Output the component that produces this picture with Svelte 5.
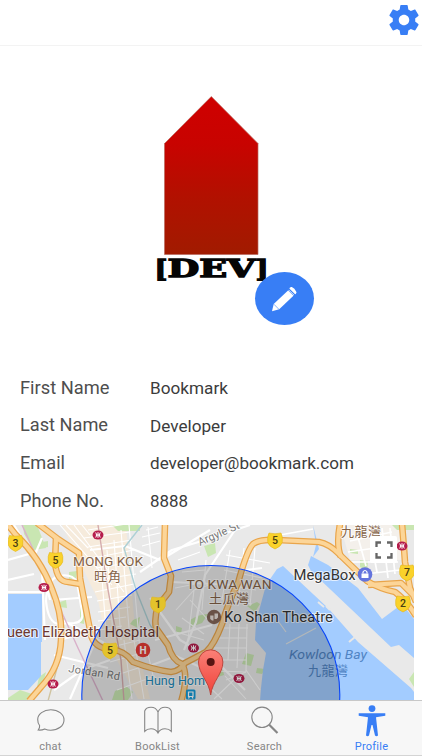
<script>
  const fields = [
    { label: 'First Name', value: 'Bookmark', lw: 89.5, vw: 78 },
    { label: 'Last Name', value: 'Developer', lw: 88, vw: 76 },
    { label: 'Email', value: 'developer@bookmark.com', lw: 45, vw: 204 },
    { label: 'Phone No.', value: '8888', lw: 84, vw: 38 }
  ];

  const tabs = [
    { id: 'chat', label: 'chat' },
    { id: 'books', label: 'BookList' },
    { id: 'search', label: 'Search' },
    { id: 'profile', label: 'Profile', active: true }
  ];

  // Minor streets of the map
  const streets = [
    'M60 525L112 585M66 525L88 548M74 525L124 592M82 525L90 535M88 530L126 524M84 538L130 532M88 547L132 540M93 558L134 550M96 568L134 562',
    'M96 580L136 574M95 592L134 584M97 601L132 595M98 612L130 607M98 621L126 617M99 630L122 626',
    'M101 565L106 630M107 550L113 635M114 540L121 640M121 530L130 640M129 525L140 650',
    'M108 648L140 640M110 662L145 652M114 676L150 664M117 690L155 676M124 640L132 699M134 640L144 699M146 645L154 680',
    'M146 530L158 527M142 537L160 533M142 546L160 541M148 527L152 568M178 560L200 552M182 572L205 570M175 588L206 582',
    'M176 610L194 590L212 584M190 600L210 622M182 618L204 634M194 590L188 640M176 632L204 640M206 560L202 610',
    'M226 555L270 563M224 570L262 578M218 583L256 590M224 600L252 604M230 550L222 600M244 548L238 606M255 548L250 606',
    'M222 628L248 628M218 638L247 638M214 648L246 648M230 624L228 660M239 624L237 668M247 624L246 672L226 680',
    'M222 660L246 660M218 671L246 672M205 683L222 699M225 676L246 699M246 670L260 690M214 699L238 676'
  ];

  const mainStreets = [
    'M8 560L36 552L42 538M8 580L34 574M8 592L42 592M14 525L44 575L50 600M42 570L45 640',
    'M46 601Q47 580 58 576Q72 573 77 582L82 612Q84 622 74 623L58 624Q48 622 46 601Z',
    'M52 600L92 597M60 640L100 628M54 655L108 668M62 620L108 645M54 690L82 670L110 660M70 699L96 640',
    'M90 550L125 546L160 560M140 572L172 550L205 540L250 525M164 558L210 530M235 530L205 575L196 622L184 650',
    'M172 582L232 585L246 570L262 568M150 598L180 640L215 660L245 690M155 640L212 625M144 668L176 656L200 667'
  ];

  const highways = [
    'M8 525L16 535Q40 558 52 589Q63 616 61 640Q60 667 41 687L29 701',
    'M37 523L58 539L79 553L80 578L83 594L91 635Q94 648 112 650Q124 650 133 662Q154 670 171 672Q180 671 185 663L206 652Q214 645 222 624Q228 603 238 583Q247 550 253 544Q259 539 277 540L319 542Q329 544 338 553L367 581Q380 589 395 592Q407 601 416 616',
    'M56 538L55 563Q57 582 68 582L80 584M165 524L164 558L171 576L169 592L158 606Q154 618 156 628L168 645Q172 660 182 664Q189 675 181 702',
    'M340 524Q336 545 341 557M402 524L404 548L405 562L410 588L416 602M368 585L401 583L415 597'
  ];

  const shields = [
    [15.5, 543, '3'], [55.5, 560, '5'], [158, 604.5, '1'], [110, 650.5, '5'],
    [275, 540.5, '5'], [407, 572.5, '7'], [403, 603.5, '2']
  ];
  const stations = [[98, 535], [44, 587.5], [53, 684], [193.5, 648], [239, 678.5], [402, 546]];
  const parks = [
    'M23 525H37L46 548L34 550L24 534Z', 'M69 572L77 571L76 578L69 579Z', 'M60 602L66 600L67 608L60 607Z',
    'M80 600L86 605L84 624L80 623Z', 'M204 546L215 543L216 553L208 557Z', 'M190 620Q199 614 208 614L202 623L191 627Z',
    'M176 626L182 628L181 634L176 632Z', 'M246 653L254 655L251 666L242 664Z', 'M257 668L265 669L262 674L256 673Z',
    'M350 549L358 550V554L350 553Z', 'M360 560L368 561L367 571L360 567Z', 'M8 698L20 690L32 694L26 701H8Z',
    'M112 525H140V531H118Z', 'M42 542L48 541L48 547L42 548Z', 'M115 691L126 686L133 692L128 700H112Z',
    'M409 679L414 672V687Z', 'M217 672L223 670L224 675L218 677Z', 'M392 525H414V530H397Z', 'M133 620L140 617L138 628L130 624Z',
    'M247 606L257 602L260 604L255 612Z', 'M39 677L46 672L44 680L37 687Z'
  ];
</script>

<div class="page">
  <header>
    <svg class="gear" viewBox="2 2 20 20"><path d="M19.43 12.98c.04-.32.07-.64.07-.98s-.03-.66-.07-.98l2.11-1.65c.19-.15.24-.42.12-.64l-2-3.46c-.12-.22-.39-.3-.61-.22l-2.49 1c-.52-.4-1.08-.73-1.69-.98l-.38-2.65C14.46 2.18 14.25 2 14 2h-4c-.25 0-.46.18-.49.42l-.38 2.65c-.61.25-1.17.59-1.69.98l-2.49-1c-.23-.09-.49 0-.61.22l-2 3.46c-.13.22-.07.49.12.64l2.11 1.65c-.04.32-.07.65-.07.98s.03.66.07.98l-2.11 1.65c-.19.15-.24.42-.12.64l2 3.46c.12.22.39.3.61.22l2.49-1c.52.4 1.08.73 1.69.98l.38 2.65c.03.24.24.42.49.42h4c.25 0 .46-.18.49-.42l.38-2.65c.61-.25 1.17-.59 1.69-.98l2.49 1c.23.09.49 0 .61-.22l2-3.46c.12-.22.07-.49-.12-.64l-2.11-1.65zM12 15.5c-1.93 0-3.5-1.57-3.5-3.5s1.57-3.5 3.5-3.5 3.5 1.57 3.5 3.5-1.57 3.5-3.5 3.5z" /></svg>
  </header>

  <main>
    <section class="hero">
      <div class="avatar">
        <svg viewBox="151 90 120 200" width="120" height="200">
          <defs>
            <linearGradient id="red" x1="0" y1="0" x2="0" y2="1">
              <stop offset="0" stop-color="#cf0000" /><stop offset=".3" stop-color="#c80300" />
              <stop offset=".65" stop-color="#b11100" /><stop offset="1" stop-color="#a11b00" />
            </linearGradient>
          </defs>
          <path d="M211.3 96.5L258 143.5V254.5H164.5V143.5Z" fill="url(#red)" stroke="#b96a60" stroke-width=".7" />
          <g class="dev">
            <text class="bracket" x="154.5" y="278" textLength="13" lengthAdjust="spacingAndGlyphs">[</text>
            <text x="167.5" y="277" textLength="88" lengthAdjust="spacingAndGlyphs">DEV</text>
            <text class="bracket" x="255.5" y="278" textLength="13" lengthAdjust="spacingAndGlyphs">]</text>
          </g>
        </svg>
        <button class="edit" aria-label="Edit">
          <svg viewBox="255 272 59 53" width="59" height="53">
            <path d="M272 311.3L273.7 304L288.8 289.8L294.2 295L279.2 309.3Z" fill="#fff" />
            <path d="M290.4 288.4L291.5 287.9Q294 289 295.6 292.4L295.2 293.2Z" fill="#fff" stroke="#fff" stroke-width="1.8" stroke-linejoin="round" />
            <path d="M288 290.1L294 296M273.9 304.2L278.9 309.3" stroke="#387ef5" stroke-width=".6" />
          </svg>
        </button>
      </div>
    </section>

    <dl>
      {#each fields as f}
        <div class="field">
          <dt><svg width="130" height="24"><text x="0" y="18" textLength={f.lw} lengthAdjust="spacingAndGlyphs">{f.label}</text></svg></dt>
          <dd><svg width="230" height="24"><text x="0" y="18" textLength={f.vw} lengthAdjust="spacingAndGlyphs">{f.value}</text></svg></dd>
        </div>
      {/each}
    </dl>

    <svg class="map" viewBox="8 525 406 175" width="406" height="175">
      <rect x="8" y="525" width="406" height="176" fill="#e9e9e9" />
      <path d="M62 525H126L136 640L150 699H138L106 640L98 600Z" fill="#f6ebdc" />
      <path d="M340 525H402V560H350Z" fill="#f4f0eb" />
      {#each parks as d}<path {d} fill="#c9e6b2" />{/each}
      <g fill="#a3ccff">
        <path d="M10 594H42V642H41V676L28 690H8V594Z" />
        <path d="M283 566L328 608L358 642L411 688L414 692V701H260L261 688L263 670L266 653L255 640L256 622L266 585L277 569Z" />
        <path d="M311 556L328 565L358 588L382 619L402 604L414 619V658L399 645L391 647L311 571L308 565Z" />
        <path d="M313 525L319 549L313 557L316 545Z" />
      </g>
      <path d="M318 602L324 607M326 606L330 610M349 642L355 637" stroke="#e8e8e8" stroke-width="2" />
      <path d="M286 644L316 628M278 621L286 632" stroke="#dfe5e8" stroke-width="1.2" />
      <g fill="none" stroke="#fff" stroke-linejoin="round">
        {#each streets as d}<path {d} stroke-width="1.1" />{/each}
        {#each mainStreets as d}<path {d} stroke-width="2.2" />{/each}
        <path d="M280 535L313 529M350 541L392 532M348 552L396 545M356 530L366 566M369 530L377 572M382 528L388 578M350 562L398 562M365 574L400 570M390 528L395 574" stroke-width="1.7" />
      </g>
      <g fill="none" stroke-width="1.4">
        <path d="M22 525L38 560L78 648L103 701" stroke="#d9b1ca" />
        <path d="M98 525L108 590L121 660L124 701" stroke="#d5acad" />
        <path d="M63 618L62 650L48 701" stroke="#cfc3a0" />
        <path d="M142 525L124 548L136 590L150 625L188 675" stroke="#add0d5" />
      </g>
      <g fill="none" stroke-linejoin="round">
        {#each highways as d}<path {d} stroke="#e9a54b" stroke-width="6.6" />{/each}
        {#each highways as d}<path {d} stroke="#fcd598" stroke-width="4.2" />{/each}
      </g>

      <g class="place">
        <text x="73" y="566" textLength="70" lengthAdjust="spacingAndGlyphs">MONG KOK</text>
        <text x="94" y="580.5" textLength="27">旺角</text>
        <text x="186.5" y="588.5" textLength="85" lengthAdjust="spacingAndGlyphs">TO KWA WAN</text>
        <text x="209" y="602.5" textLength="40">土瓜灣</text>
        <text x="341" y="536" textLength="40">九龍灣</text>
      </g>
      <g class="road">
        <text x="200" y="546" textLength="44" transform="rotate(-24 200 546)">Argyle St</text>
        <text x="68" y="672" textLength="52" transform="rotate(9 68 672)">Jordan Rd</text>
      </g>
      <text class="poi hospital" x="7" y="637" textLength="152" lengthAdjust="spacingAndGlyphs">ueen Elizabeth Hospital</text>
      <text class="poi" x="224" y="622" textLength="109" lengthAdjust="spacingAndGlyphs">Ko Shan Theatre</text>
      <text class="poi" x="293.5" y="579.5" textLength="62" lengthAdjust="spacingAndGlyphs">MegaBox</text>
      <text class="bay" x="289" y="659" textLength="78" lengthAdjust="spacingAndGlyphs">Kowloon Bay</text>
      <text class="bay cjk" x="308" y="675" textLength="40">九龍灣</text>
      <text class="station" x="145" y="685" textLength="60" lengthAdjust="spacingAndGlyphs">Hung Hom</text>

      {#each stations as [x, y]}
        <g transform="translate({x} {y})">
          <ellipse rx="5.5" ry="4.6" fill="#b51c4b" />
          <path d="M-2.3-2.5Q0 0-2.3 2.5M2.3-2.5Q0 0 2.3 2.5M0-2.8V2.8M-2.2 0H2.2" fill="none" stroke="#fff" />
        </g>
      {/each}
      <circle cx="143" cy="650" r="7.3" fill="#e53c35" />
      <text class="h" x="143" y="653.7">H</text>
      <circle cx="214" cy="617" r="7.2" fill="#846659" />
      <path d="M210.2 615.5H213.5V620.5H212L210.2 619ZM214.5 613.5H218V617.5L216.5 619H214.5Z" fill="#e8dfda" />
      <circle cx="365" cy="574.5" r="7.3" fill="#6474dd" />
      <path d="M361.5 573.5H368.5V578H361.5Z" fill="#fff" />
      <path d="M363 573.5V572Q365 569 367 572V573.5" fill="none" stroke="#fff" stroke-width="1.2" />
      <rect x="186" y="689.5" width="9.5" height="10" rx="1.5" fill="#169bd7" />
      <path d="M188.5 692H193V696.5H188.5ZM188.5 698.5L189.5 696.5M193 698.5L192 696.5" fill="none" stroke="#fff" stroke-width="1.2" />

      <circle cx="210.8" cy="694.5" r="129" fill="#000" fill-opacity=".2" stroke="#0845fa" stroke-width="1.1" />

      {#each shields as [x, y, n]}
        <g transform="translate({x} {y})">
          <path d="M-6-7.5Q0-6 6-7.5Q8-4 7.2 2Q6 6 0 8.5Q-6 6-7.2 2Q-8-4-6-7.5Z" fill={y > 603.9 && x < 200 ? '#e3c32b' : '#fad22b'} stroke="#e3b51d" stroke-width=".6" />
          <text class="num" y="3.8">{n}</text>
        </g>
      {/each}
      <rect x="370" y="536" width="27" height="27" rx="2" fill="#fff" />
      <path d="M381 542.5H376.5V547M387 542.5H391.5V547M381 557.5H376.5V553M387 557.5H391.5V553" fill="none" stroke="#666" stroke-width="2.3" />
      <path d="M210.7 695C209 681 198.5 674 198.5 662A12.2 12.2 0 0 1 222.9 662C222.9 674 212.4 681 210.7 695Z" fill="url(#pin)" stroke="#b83e36" stroke-width=".9" />
      <defs><linearGradient id="pin" x1="0" y1="0" x2="0" y2="1"><stop stop-color="#fb8077" /><stop offset="1" stop-color="#f0433a" /></linearGradient></defs>
      <circle cx="210.7" cy="662" r="4" fill="#581412" />
    </svg>
  </main>

  <nav>
    {#each tabs as t}
      <div class="tab" class:active={t.active}>
        <svg width="32" height="34" viewBox="0 0 32 34" fill="none" stroke="currentColor" stroke-width="1.1">
          {#if t.id === 'chat'}
            <path d="M3.2 30Q5 27.5 4.6 25.5Q2.7 23.2 2.7 19.4C2.7 14 8.6 9.8 15.8 9.8S29 14 29 19.9S23.1 30.2 15.8 30.2Q12.6 30.2 9.7 28.9Q6.5 30.5 3.2 30Z" />
          {:else if t.id === 'books'}
            <path d="M16 12Q14 7.2 9 7.2Q4 7.2 2.7 11V31.3Q5 28.7 9 28.7Q14 28.7 16 33Q18 28.7 23 28.7Q27 28.7 29.3 31.3V11Q28 7.2 23 7.2Q18 7.2 16 12ZM16 12V33" />
          {:else if t.id === 'search'}
            <circle cx="13" cy="17.3" r="10.2" />
            <path d="M20 24.5L28.5 33" stroke-width="2.2" />
          {:else}
            <circle cx="16" cy="8.6" r="3.4" fill="currentColor" stroke="none" />
            <path d="M2.7 13.2H29.3V15.8L20 17.2L22 35.5Q20.4 37 19 35.5L16.5 25H15.5L13 35.5Q11.6 37 10 35.5L12 17.2L2.7 15.8Z" fill="currentColor" stroke="none" />
          {/if}
        </svg>
        <span>{t.label}</span>
      </div>
    {/each}
  </nav>
</div>

<style>
  :global(body) { margin: 0; background: #fff; }
  .page { width: 422px; height: 756px; display: flex; flex-direction: column; overflow: hidden; font-family: Roboto, "Noto Sans CJK TC", sans-serif; background: #fff; }
  header { box-sizing: border-box; height: 46px; flex: none; border-bottom: 1px solid #f3f3f3; display: flex; justify-content: flex-end; padding: 5px 3px 0 0; }
  .gear { width: 30px; height: 30px; fill: #387ef5; }
  main { height: 654px; flex: none; overflow: hidden; }
  .hero { display: flex; justify-content: center; padding-top: 44px; height: 279px; }
  .avatar { position: relative; width: 120px; height: 200px; }
  .avatar > svg { display: block; }
  .dev { font: bold 24px "DejaVu Serif", serif; fill: #050505; stroke: #050505; stroke-width: 1.3; }
  .bracket { font-size: 24px; }
  .edit { position: absolute; left: 104px; top: 182px; width: 59px; height: 53px; padding: 0; border: 0; border-radius: 50%; background: #387ef5; }
  .edit svg { display: block; }
  dl { margin: 0; padding: 6px 20px 0; height: 150px; }
  .field { display: flex; height: 37.7px; }
  dt { width: 130px; margin-top: .5px; font-size: 18px; }
  dd { margin: 1px 0 0; font-size: 17px; }
  dt svg, dd svg { display: block; overflow: visible; }
  dt text { fill: #4e4e4e; }
  dd text { fill: #3c3c3c; }
  .map { display: block; margin-left: 8px; }
  .map text { paint-order: stroke; stroke: #ffffffb0; stroke-width: 2px; stroke-linejoin: round; }
  .place { font-size: 13px; fill: #846247; }
  .road { font-size: 11px; fill: #777; }
  .poi { font-size: 14.5px; fill: #333; }
  .map .hospital { font-size: 14px; fill: #6d3830; }
  .map .bay { font-size: 13px; font-style: italic; fill: #5084c4; stroke: none; }
  .map .cjk { font-style: normal; }
  .station { font-size: 13px; fill: #2189b8; }
  .map .h { font-size: 10px; font-weight: 700; fill: #fff; stroke: none; text-anchor: middle; }
  .map .num { font-size: 10.5px; font-weight: 500; fill: #493e13; stroke: none; text-anchor: middle; }
  nav { box-sizing: border-box; height: 56px; flex: none; display: flex; background: #f7f7f7; border-top: 1px solid #c8c8c8; border-bottom: 1px solid #d4d4d4; }
  .tab { flex: none; width: 107px; display: flex; flex-direction: column; align-items: center; color: #868686; font-size: 11px; line-height: 13px; letter-spacing: .25px; }
  .tab:first-child { margin-left: -3px; }
  .tab svg { display: block; overflow: visible; margin-top: -1px; }
  .tab span { margin-top: 6px; }
  .tab.active { color: #387ef5; }
</style>
